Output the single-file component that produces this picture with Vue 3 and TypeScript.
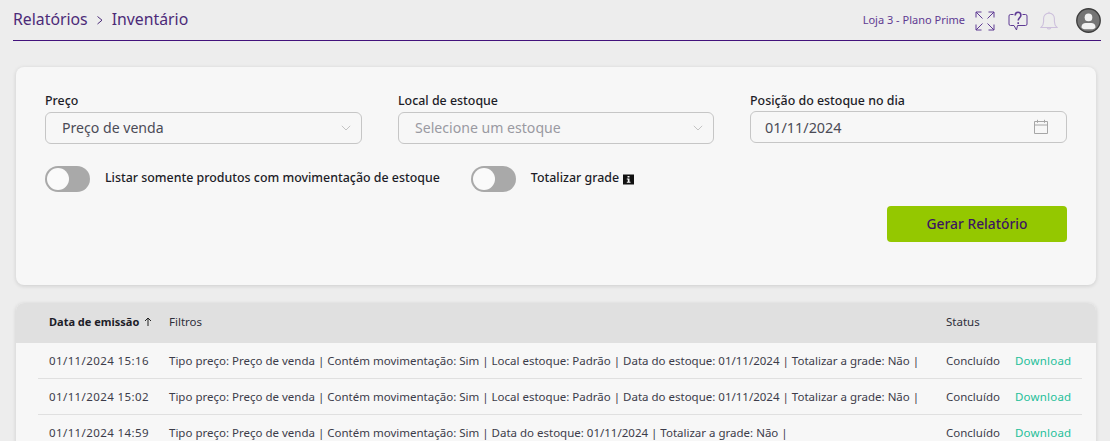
<script setup lang="ts">
interface Row { date: string; filters: string }
const rows: Row[] = [
  { date: '01/11/2024 15:16', filters: 'Tipo preço: Preço de venda | Contém movimentação: Sim | Local estoque: Padrão | Data do estoque: 01/11/2024 | Totalizar a grade: Não |' },
  { date: '01/11/2024 15:02', filters: 'Tipo preço: Preço de venda | Contém movimentação: Sim | Local estoque: Padrão | Data do estoque: 01/11/2024 | Totalizar a grade: Não |' },
  { date: '01/11/2024 14:59', filters: 'Tipo preço: Preço de venda | Contém movimentação: Sim | Data do estoque: 01/11/2024 | Totalizar a grade: Não |' },
]
</script>

<template>
  <div class="page">
    <header class="topbar">
      <div class="crumbs">
        <span>Relatórios</span>
        <svg class="crumb-sep" width="10" height="10" viewBox="0 0 10 10"><path d="M2.5 1.5 7 5.2 2.5 9" fill="none" stroke="#4a2a78" stroke-width="1"/></svg>
        <span>Inventário</span>
      </div>
      <div class="top-right">
        <span class="store">Loja 3 - Plano Prime</span>
        <svg class="ico expand" width="20" height="20" viewBox="0 0 20 20" fill="none" stroke="#5e3a94" stroke-width="1">
          <path d="M1 6.500V1h5.500M1 1l6.500 6.500M13.500 1H19v5.500M19 1l-6.500 6.500M1 13.500V19h5.500M1 19l6.500-6.500M19 13.500V19h-5.500M19 19l-6.500-6.500"/>
        </svg>
        <svg class="ico help" width="20" height="20" viewBox="0 0 20 20" fill="none" stroke="#5e3a94" stroke-width="1">
          <path d="M5.500 3.500H2.500A1.500 1.500 0 0 0 1 5v8a1.500 1.500 0 0 0 1.500 1.500H6l2.500 4.500 1-4.500h8a1.500 1.500 0 0 0 1.500-1.500V5a1.500 1.500 0 0 0-1.500-1.500H14.500"/>
          <path d="M7.200 4.500C7.200 2.500 8.400 1.200 10 1.200s2.900 1.300 2.900 3c0 2.400-2.700 2.800-2.700 5.300M10.200 11.200v1.800" stroke-width="1.600"/>
        </svg>
        <svg class="ico bell" width="18" height="20" viewBox="0 0 18 20" fill="none" stroke="#cdc0dc" stroke-width="1.100">
          <path d="M1 16.500c1.600-1.400 2.600-3 2.600-6V7.500a5.400 5.400 0 0 1 10.800 0v3c0 3 1 4.600 2.600 6ZM7.300 16.800a1.800 1.800 0 0 0 3.400 0M9 2V.8"/>
        </svg>
        <svg class="avatar" width="25" height="25" viewBox="0 0 26 26">
          <circle cx="13" cy="13" r="12.200" fill="#757575" stroke="#3d3d3d" stroke-width="1.400"/>
          <circle cx="13" cy="9.800" r="4" fill="#f2f2f2"/>
          <path d="M5.800 20.500v-1.200c0-2.400 2-3.800 4.200-3.800h6c2.200 0 4.200 1.400 4.200 3.800v1.200c-1.200 1-2.800 1.600-4.200 1.600h-6c-1.400 0-3-.6-4.200-1.600Z" fill="#f2f2f2"/>
        </svg>
      </div>
    </header>

    <section class="card form-card">
      <div class="fields">
        <div class="field">
          <label>Preço</label>
          <div class="control">
            <span class="value">Preço de venda</span>
            <svg width="10" height="6" viewBox="0 0 10 6"><path d="M.8.8 5 5 9.200.8" fill="none" stroke="#c4c4c4"/></svg>
          </div>
        </div>
        <div class="field">
          <label>Local de estoque</label>
          <div class="control">
            <span class="value placeholder">Selecione um estoque</span>
            <svg width="10" height="6" viewBox="0 0 10 6"><path d="M.8.8 5 5 9.200.8" fill="none" stroke="#c4c4c4"/></svg>
          </div>
        </div>
        <div class="field">
          <label>Posição do estoque no dia</label>
          <div class="control date">
            <span class="value">01/11/2024</span>
            <svg width="16" height="16" viewBox="0 0 16 16" fill="none" stroke="#a6a6a6"><path d="M1.500 2.500h13v12h-13zM1.500 6h13M4.500 .8v3M11.500 .8v3"/></svg>
          </div>
        </div>
      </div>

      <div class="toggles">
        <div class="toggle-row">
          <span class="toggle"><span class="knob"></span></span>
          <span class="toggle-label">Listar somente produtos com movimentação de estoque</span>
        </div>
        <div class="toggle-row">
          <span class="toggle"><span class="knob"></span></span>
          <span class="toggle-label">Totalizar grade</span>
          <svg class="info" width="11" height="11" viewBox="0 0 11 11"><path d="M0 .5h11v10H0z" fill="#111"/><path d="M4.500 2h2v1.500h-2zM3.800 4.500h2.700v3.300h1v1h-3.700v-1h1V5.500h-1z" fill="#f7f7f7"/></svg>
        </div>
      </div>

      <div class="actions">
        <button class="primary" type="button">Gerar Relatório</button>
      </div>
    </section>

    <section class="card table-card">
      <div class="thead">
        <span class="th-date">Data de emissão <svg width="8" height="9" viewBox="0 0 8 9"><path d="M4 9V1M1 4l3-3 3 3" fill="none" stroke="#222" stroke-width="1"/></svg></span>
        <span>Filtros</span>
        <span>Status</span>
      </div>
      <div v-for="r in rows" :key="r.date" class="trow">
        <span class="td-date">{{ r.date }}</span>
        <span>{{ r.filters }}</span>
        <span>Concluído</span>
        <a class="dl">Download</a>
      </div>
    </section>
  </div>
</template>

<style>
html, body { margin: 0; background: #ededed; overflow: hidden; }
</style>

<style scoped>
.page {
  width: 1110px;
  height: 441px;
  overflow: hidden;
  background: #ededed;
  font-family: "Noto Sans", "Open Sans", sans-serif;
  color: #3c3c4a;
  box-sizing: border-box;
}
.topbar {
  height: 41px;
  margin: 0 9px 0 13px;
  box-sizing: border-box;
  border-bottom: 1px solid #43137c;
  display: flex;
  align-items: flex-start;
  justify-content: space-between;
}
.crumbs {
  display: flex;
  align-items: center;
  gap: 7px;
  font-size: 15.800px;
  line-height: 20px;
  padding-top: 9px;
  color: #4c2a78;
}
.crumb-sep { margin-top: 2px; }
.top-right {
  display: flex;
  align-items: center;
  padding-top: 8px;
}
.store { font-size: 11px; color: #5f3a92; margin: -3px 10px 0 -1px; }
.expand { margin-right: 13px; }
.help { margin-right: 12px; }
.bell { margin-right: 18px; }
.card {
  margin: 0 14px 0 16px;
  width: 1080px;
  background: #f7f7f7;
  border-radius: 8px;
  box-shadow: 0 1px 4px rgba(0, 0, 0, .14);
}
.form-card {
  margin-top: 26px;
  height: 218px;
  box-sizing: border-box;
  padding: 26px 29px 0;
}
.fields {
  display: grid;
  grid-template-columns: 317px 316px 317px;
  column-gap: 36px;
}
.field label {
  display: block;
  font-size: 12.400px;
  line-height: 16px;
  font-weight: 500;
  color: #1d1d28;
  margin-bottom: 3px;
}
.control {
  height: 32px;
  box-sizing: border-box;
  border: 1px solid #c6c6c6;
  border-radius: 6px;
  display: flex;
  align-items: center;
  justify-content: space-between;
  padding: 0 10px 1px 16px;
  font-size: 14.100px;
  color: #4b4b56;
}
.control.date { margin-top: -1px; padding: 0 17px 0 14px; font-size: 14.400px; }
.placeholder { color: #9a9aa2; }
.toggles {
  display: flex;
  margin-top: 22px;
  gap: 31px;
}
.toggle-row { display: flex; align-items: center; }
.toggle {
  width: 45px;
  height: 26px;
  box-sizing: border-box;
  padding: 2px;
  border-radius: 13px;
  background: #a9a9a9;
  flex: none;
  display: flex;
}
.knob {
  width: 22px;
  height: 22px;
  background: #fafafa;
  border-radius: 50%;
}
.toggle-label {
  font-size: 12.400px;
  font-weight: 500;
  color: #1d1d28;
  margin: -3px 0 0 15px;
}
.info { margin: 1px 0 0 4px; }
.actions {
  display: flex;
  justify-content: flex-end;
  margin-top: 14px;
}
.primary {
  width: 180px;
  height: 36px;
  border: 0;
  border-radius: 4px;
  background: #94c800;
  color: #3d1560;
  font: 500 13.800px "Noto Sans", sans-serif;
  padding-bottom: 2px;
}
.table-card {
  margin-top: 18px;
  overflow: hidden;
}
.thead, .trow {
  display: grid;
  grid-template-columns: 120px 777px 69px 1fr;
  align-items: center;
  font-size: 11.500px;
}
.thead {
  height: 40px;
  background: #e0e0e0;
  padding: 0 0 3px 33px;
  box-sizing: border-box;
  color: #2e2e3a;
}
.th-date { font-size: 11px; font-weight: 700; color: #1d1d28; white-space: nowrap; }
.th-date svg { margin-left: 2px; }
.trow {
  height: 36px;
  box-sizing: border-box;
  margin: 0 14px 0 22px;
  padding-left: 11px;
  border-bottom: 1px solid #e0e0e0;
  white-space: nowrap;
}
.td-date { letter-spacing: .400px; }
.dl { color: #1fbf9a; letter-spacing: .200px; }
</style>
